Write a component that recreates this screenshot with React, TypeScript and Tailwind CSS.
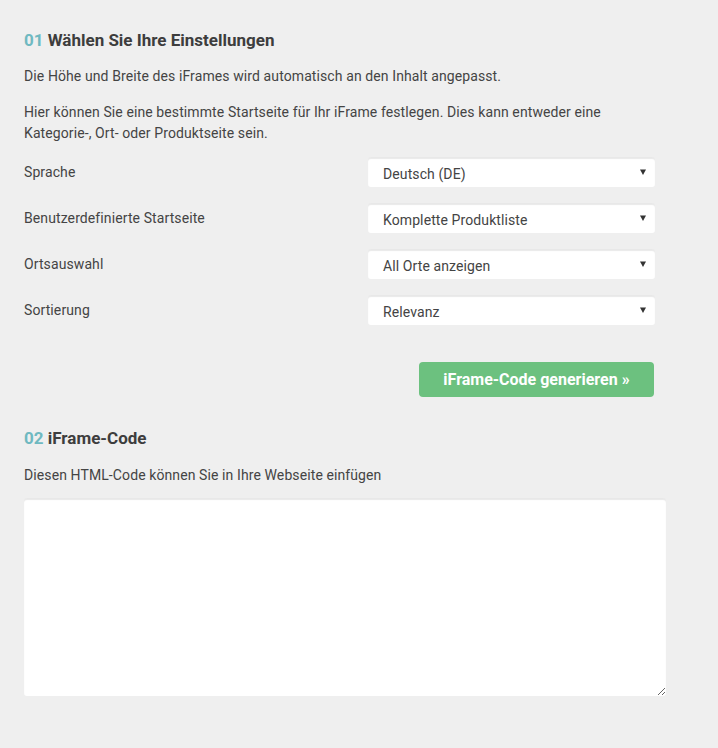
import React from "react";

const rows = [
  { label: "Sprache", value: "Deutsch (DE)" },
  { label: "Benutzerdefinierte Startseite", value: "Komplette Produktliste" },
  { label: "Ortsauswahl", value: "All Orte anzeigen" },
  { label: "Sortierung", value: "Relevanz" },
];

function Select({ value }: { value: string }) {
  return (
    <div className="relative flex h-[30px] w-[287px] items-center rounded-[3px] bg-white pl-[15px] text-[14px] tracking-[0.1px] text-[#444] shadow-[inset_0_2px_1px_rgba(0,0,0,0.09)]">
      <span className="mt-[5px]">{value}</span>
      <svg className="absolute right-[9px] top-[12px]" width="6" height="6" viewBox="0 0 6 6">
        <path d="M0 0.5 L6 0.5 L3 6 Z" fill="#333" />
      </svg>
    </div>
  );
}

export default function App() {
  return (
    <div
      className="min-h-[748px] w-[718px] bg-[#efefef] pl-[24px] pt-[29px] text-[#444]"
      style={{ fontFamily: "Roboto, 'Liberation Sans', sans-serif" }}
    >
      <h2 className="text-[17px] font-bold leading-[23px] text-[#3d3d3d]">
        <span className="text-[#6fb9c1]">01</span> Wählen Sie Ihre Einstellungen
      </h2>
      <p className="mt-[14px] text-[14px] leading-[21px] tracking-[0.1px]">
        Die Höhe und Breite des iFrames wird automatisch an den Inhalt angepasst.
      </p>
      <p className="mt-[15px] w-[620px] text-[14px] leading-[21px] tracking-[0.1px]">
        Hier können Sie eine bestimmte Startseite für Ihr iFrame festlegen. Dies kann entweder eine
        Kategorie-, Ort- oder Produktseite sein.
      </p>
      <div className="mt-[13px] flex w-[631px] flex-col gap-[16px]">
        {rows.map((r) => (
          <div key={r.label} className="flex items-start justify-between">
            <div className="pt-[5px] text-[14px] leading-[21px] tracking-[0.1px]">{r.label}</div>
            <Select value={r.value} />
          </div>
        ))}
      </div>
      <div className="mt-[37px] flex w-[630px] justify-end">
        <button className="h-[35px] w-[235px] rounded-[4px] bg-[#6cc17f] text-[16px] font-bold text-white">
          iFrame-Code generieren »
        </button>
      </div>
      <h2 className="mt-[30px] text-[17px] font-bold leading-[23px] text-[#3d3d3d]">
        <span className="text-[#6fb9c1]">02</span> iFrame-Code
      </h2>
      <p className="mt-[15px] text-[14px] leading-[21px] tracking-[0.1px]">
        Diesen HTML-Code können Sie in Ihre Webseite einfügen
      </p>
      <textarea
        className="mt-[12px] block h-[198px] w-[642px] rounded-[3px] bg-white shadow-[inset_0_2px_1px_rgba(0,0,0,0.09)] outline-none"
        defaultValue=""
      />
    </div>
  );
}
